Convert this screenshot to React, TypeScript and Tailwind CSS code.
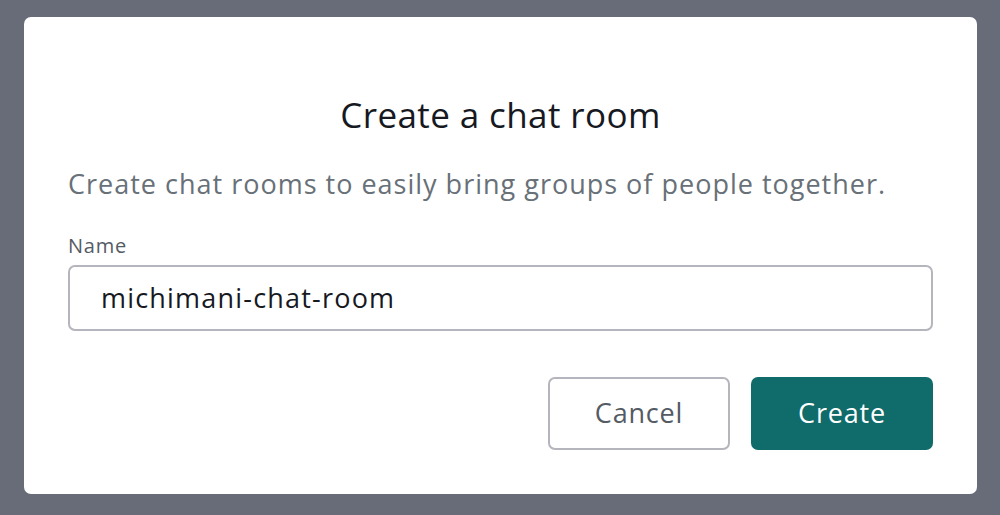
export default function App() {
  return (
    <div
      className="w-[1000px] h-[515px] bg-[#686b78] pt-[17px] pl-[24px]"
      style={{ fontFamily: '"Open Sans", "Noto Sans", sans-serif' }}
    >
      <div className="w-[953px] h-[477px] bg-white rounded-[7px] flex flex-col px-[44px]">
        <h1 className="mt-[74px] text-center text-[35px] leading-[48px] tracking-[0.4px] text-[#16191f]">
          Create a chat room
        </h1>
        <p className="mt-[27px] text-[27px] leading-[36px] tracking-[1px] text-[#687078]">
          Create chat rooms to easily bring groups of people together.
        </p>
        <label className="mt-[31px] text-[20px] leading-[26px] tracking-[0.8px] text-[#545b64]">Name</label>
        <div className="mt-[6px] h-[66px] border-2 border-[#b4b5bd] rounded-[7px] flex items-center px-[31px] text-[27px] tracking-[1.2px] text-[#16191f]">
          michimani-chat-room
        </div>
        <div className="mt-[46px] flex justify-end gap-[21px]">
          <button className="w-[182px] h-[73px] border-2 border-[#b4b5bd] rounded-[7px] text-[27px] tracking-[0.8px] text-[#545b64]">
            Cancel
          </button>
          <button className="w-[182px] h-[73px] bg-[#106b6b] rounded-[7px] text-[27px] tracking-[0.8px] text-white">
            Create
          </button>
        </div>
      </div>
    </div>
  );
}
